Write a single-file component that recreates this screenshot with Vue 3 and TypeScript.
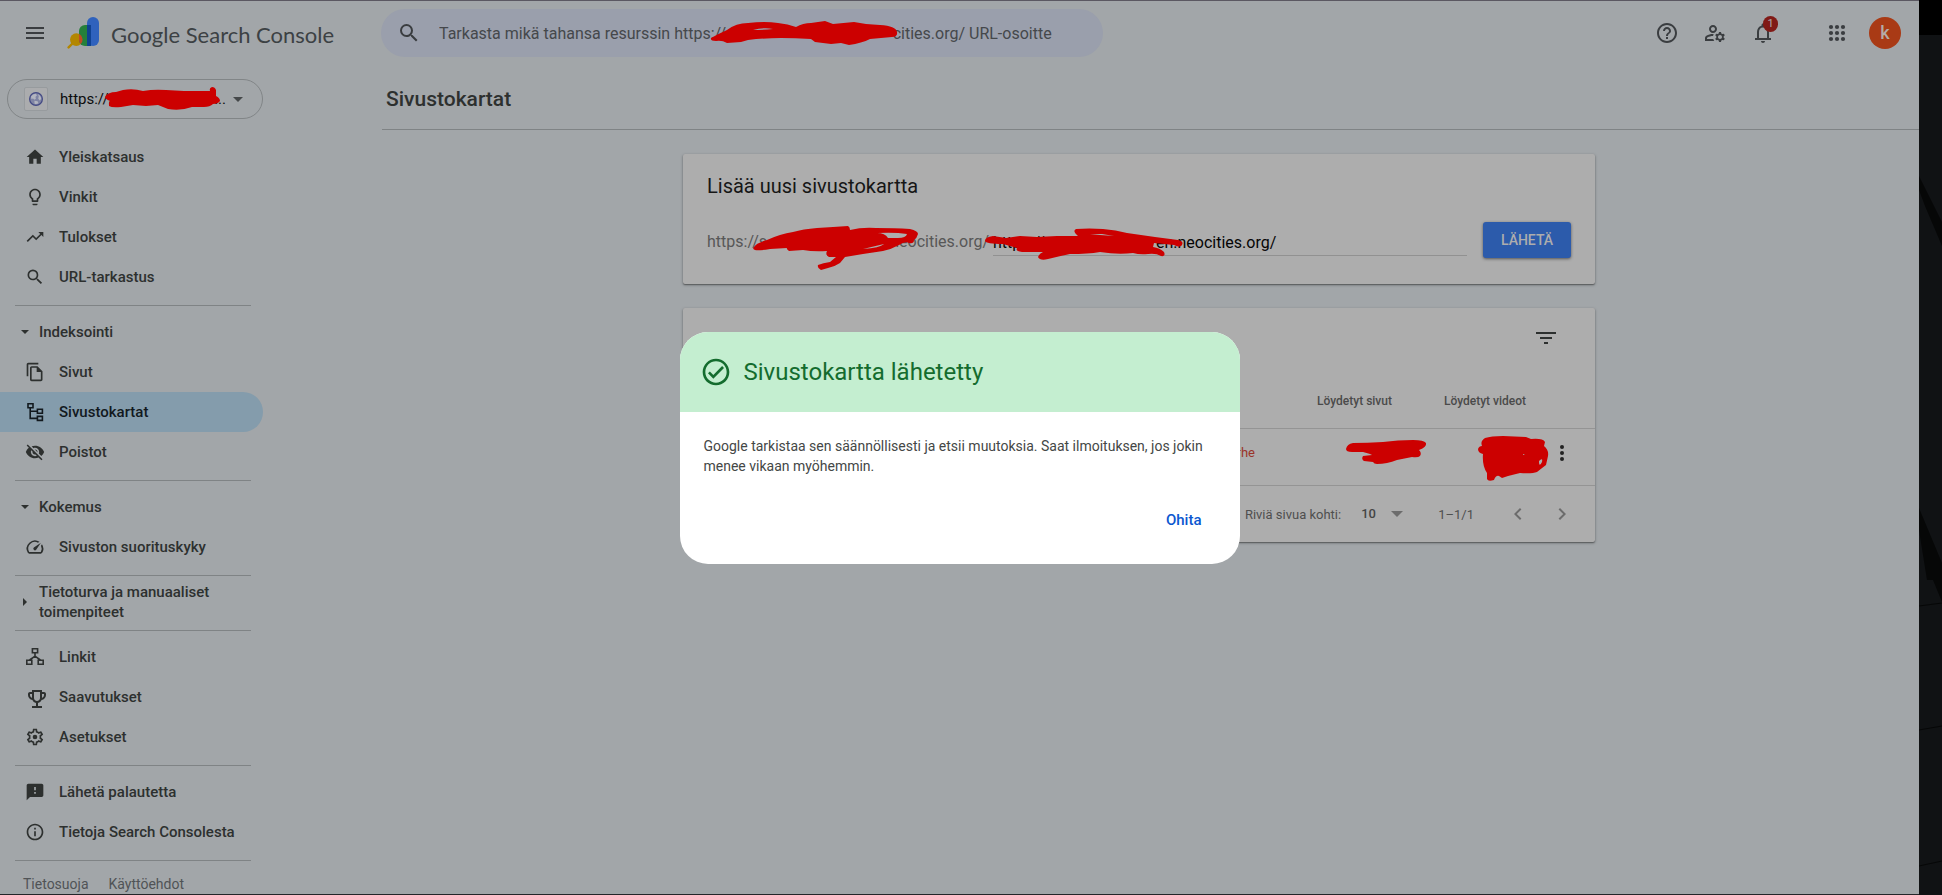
<script setup lang="ts">
import { ref } from 'vue'

interface NavItem {
  label: string
  path: string
  box?: string
  line?: boolean
  active?: boolean
}
interface NavGroup {
  title?: string
  open?: boolean
  items: NavItem[]
}

const searchPath =
  'M15.5 14h-.79l-.28-.27A6.471 6.471 0 0 0 16 9.5 6.5 6.5 0 1 0 9.5 16c1.61 0 3.09-.59 4.23-1.57l.27.28v.79l5 4.99L20.49 19l-4.99-5zm-6 0C7.01 14 5 11.99 5 9.5S7.01 5 9.5 5 14 7.01 14 9.5 11.99 14 9.5 14z'

const groups: NavGroup[] = [
  {
    items: [
      { label: 'Yleiskatsaus', path: 'M10 20v-6h4v6h5v-8h3L12 3 2 12h3v8z' },
      {
        label: 'Vinkit',
        path: 'M9 21c0 .55.45 1 1 1h4c.55 0 1-.45 1-1v-1H9v1zm3-19C8.14 2 5 5.14 5 9c0 2.38 1.19 4.47 3 5.74V17c0 .55.45 1 1 1h6c.55 0 1-.45 1-1v-2.26c1.81-1.27 3-3.36 3-5.74 0-3.86-3.14-7-7-7zm2.85 11.1l-.85.6V16h-4v-2.3l-.85-.6A4.997 4.997 0 0 1 7 9c0-2.76 2.24-5 5-5s5 2.24 5 5c0 1.63-.8 3.16-2.15 4.1z',
      },
      { label: 'Tulokset', path: 'M16 6l2.29 2.29-4.88 4.88-4-4L2 16.59 3.41 18l6-6 4 4 6.3-6.29L22 12V6z' },
      { label: 'URL-tarkastus', path: searchPath },
    ],
  },
  {
    title: 'Indeksointi',
    open: true,
    items: [
      {
        label: 'Sivut',
        path: 'M16 1H4c-1.1 0-2 .9-2 2v14h2V3h12V1zm-1 4H8c-1.1 0-1.99.9-1.99 2L6 21c0 1.1.89 2 1.99 2H19c1.1 0 2-.9 2-2V11l-6-6zM8 21V7h6v5h5v9H8z',
      },
      {
        label: 'Sivustokartat',
        path: 'M3 1.8h5v4H3zM12.4 7.2h5v4h-5zM12.4 14.4h5v4h-5zM5.2 6v10.4h7M5.2 9.2h7',
        box: '0 0 20 20',
        line: true,
        active: true,
      },
      {
        label: 'Poistot',
        path: 'M12 7c2.76 0 5 2.24 5 5 0 .65-.13 1.26-.36 1.83l2.92 2.92c1.51-1.26 2.7-2.89 3.43-4.75-1.73-4.39-6-7.5-11-7.5-1.4 0-2.74.25-3.98.7l2.16 2.16C10.74 7.13 11.35 7 12 7zM2 4.27l2.28 2.28.46.46C3.08 8.3 1.78 10.02 1 12c1.73 4.39 6 7.5 11 7.5 1.55 0 3.03-.3 4.38-.84l.42.42L19.73 22 21 20.73 3.27 3 2 4.27zM7.53 9.8l1.55 1.55c-.05.21-.08.43-.08.65 0 1.66 1.34 3 3 3 .22 0 .44-.03.65-.08l1.55 1.55c-.67.33-1.41.53-2.2.53-2.76 0-5-2.24-5-5 0-.79.2-1.53.53-2.2zm4.31-.78l3.15 3.15.02-.16c0-1.66-1.34-3-3-3l-.17.01z',
      },
    ],
  },
  {
    title: 'Kokemus',
    open: true,
    items: [
      {
        label: 'Sivuston suorituskyky',
        path: 'M20.38 8.57l-1.23 1.85a8 8 0 0 1-.22 7.58H5.07A8 8 0 0 1 15.58 6.85l1.85-1.23A10 10 0 0 0 3.35 19a2 2 0 0 0 1.72 1h13.85a2 2 0 0 0 1.74-1 10 10 0 0 0-.27-10.44zm-9.79 6.84a2 2 0 0 0 2.83 0l5.66-8.49-8.49 5.66a2 2 0 0 0 0 2.83z',
      },
    ],
  },
  { title: 'Tietoturva ja manuaaliset toimenpiteet', open: false, items: [] },
  {
    items: [
      {
        label: 'Linkit',
        path: 'M7.4 1.8h5.2v4H7.4zM1.8 13.2h5v4h-5zM13.2 13.2h5v4h-5zM10 6v3.6M4.6 13L10 9.2l5.4 3.8',
        box: '0 0 20 20',
        line: true,
      },
      {
        label: 'Saavutukset',
        path: 'M19 5h-2V3H7v2H5c-1.1 0-2 .9-2 2v1c0 2.55 1.92 4.63 4.39 4.94.63 1.5 1.98 2.63 3.61 2.96V19H7v2h10v-2h-4v-3.1c1.63-.33 2.98-1.46 3.61-2.96C19.08 12.63 21 10.55 21 8V7c0-1.1-.9-2-2-2zM5 8V7h2v3.82C5.84 10.4 5 9.3 5 8zm7 6c-1.65 0-3-1.35-3-3V5h6v6c0 1.65-1.35 3-3 3zm7-6c0 1.3-.84 2.4-2 2.82V7h2v1z',
        box: '0 0 20 20',
      },
      {
        label: 'Asetukset',
        path: 'M19.43 12.98c.04-.32.07-.64.07-.98 0-.34-.03-.66-.07-.98l2.11-1.65c.19-.15.24-.42.12-.64l-2-3.46c-.09-.16-.26-.25-.44-.25-.06 0-.12.01-.17.03l-2.49 1c-.52-.4-1.08-.73-1.69-.98l-.38-2.65C14.46 2.18 14.25 2 14 2h-4c-.25 0-.46.18-.49.42l-.38 2.65c-.61.25-1.17.59-1.69.98l-2.49-1c-.06-.02-.12-.03-.18-.03-.17 0-.34.09-.43.25l-2 3.46c-.13.22-.07.49.12.64l2.11 1.65c-.04.32-.07.65-.07.98 0 .33.03.66.07.98l-2.11 1.65c-.19.15-.24.42-.12.64l2 3.46c.09.16.26.25.44.25.06 0 .12-.01.17-.03l2.49-1c.52.4 1.08.73 1.69.98l.38 2.65c.03.24.24.42.49.42h4c.25 0 .46-.18.49-.42l.38-2.65c.61-.25 1.17-.59 1.69-.98l2.49 1c.06.02.12.03.18.03.17 0 .34-.09.43-.25l2-3.46c.12-.22.07-.49-.12-.64l-2.11-1.65zm-1.98-1.71c.04.31.05.52.05.73 0 .21-.02.43-.05.73l-.14 1.13.89.7 1.08.84-.7 1.21-1.27-.51-1.04-.42-.9.68c-.43.32-.84.56-1.25.73l-1.06.43-.16 1.13-.2 1.35h-1.4l-.19-1.35-.16-1.13-1.06-.43c-.43-.18-.83-.41-1.23-.71l-.91-.7-1.06.43-1.27.51-.7-1.21 1.08-.84.89-.7-.14-1.13c-.03-.31-.05-.54-.05-.74s.02-.43.05-.73l.14-1.13-.89-.7-1.08-.84.7-1.21 1.27.51 1.04.42.9-.68c.43-.32.84-.56 1.25-.73l1.06-.43.16-1.13.2-1.35h1.39l.19 1.35.16 1.13 1.06.43c.43.18.83.41 1.23.71l.91.7 1.06-.43 1.27-.51.7 1.21-1.07.85-.89.7.14 1.13zM12 9.2a2.8 2.8 0 1 0 0 5.6 2.8 2.8 0 0 0 0-5.6z',
      },
    ],
  },
  {
    items: [
      {
        label: 'Lähetä palautetta',
        path: 'M20 2H4c-1.1 0-1.99.9-1.99 2L2 22l4-4h14c1.1 0 2-.9 2-2V4c0-1.1-.9-2-2-2zm-7 12h-2v-2h2v2zm0-4h-2V6h2v4z',
      },
      {
        label: 'Tietoja Search Consolesta',
        path: 'M11 7h2v2h-2zm0 4h2v6h-2zm1-9C6.48 2 2 6.48 2 12s4.48 10 10 10 10-4.48 10-10S17.52 2 12 2zm0 18c-4.41 0-8-3.59-8-8s3.59-8 8-8 8 3.59 8 8-3.59 8-8 8z',
      },
    ],
  },
]

const blank = (count: number): string => '\u00a0'.repeat(count)
const searchHint = `Tarkasta mikä tahansa resurssin https://${blank(42)}cities.org/ URL-osoitte`
const sitemapUrl = ref(`https://${blank(28)}en.neocities.org/`)
const rowsPerPage = ref('10')
const dialogOpen = ref(true)
const dots = [6, 12, 18]
</script>

<template>
  <div class="desktop">
    <div class="page">
      <header class="topbar">
        <div class="brand">
          <button class="menu" type="button" aria-label="Valikko">
            <svg width="18" height="12" viewBox="0 0 18 12"><path d="M0 0h18v2H0zM0 5h18v2H0zM0 10h18v2H0z" /></svg>
          </button>
          <svg class="logo" width="32" height="32" viewBox="0 0 32 32" aria-hidden="true">
            <defs>
              <clipPath id="green-bar"><rect x="12" y="8" width="16" height="21" rx="6" /></clipPath>
            </defs>
            <path d="M1.6 30.4L7 25" stroke="#b38600" stroke-width="2.4" stroke-linecap="round" />
            <circle cx="9.3" cy="22.6" r="6.3" fill="#b38600" />
            <rect x="12" y="8" width="16" height="21" rx="6" fill="#25803b" />
            <rect x="20" y="0" width="12" height="29" rx="6" fill="#2f62bd" />
            <rect x="20" y="8" width="4" height="21" fill="#0f4291" />
            <circle cx="9.3" cy="22.6" r="6.3" fill="#c04a24" clip-path="url(#green-bar)" />
          </svg>
          <span class="wordmark">Google Search Console</span>
        </div>

        <label class="search">
          <svg width="24" height="24" viewBox="0 0 24 24" aria-hidden="true"><path :d="searchPath" /></svg>
          <input type="text" :placeholder="searchHint" aria-label="Tarkasta URL-osoite" />
          <svg class="mark mark-search" width="188" height="28" viewBox="710 19 188 28" aria-hidden="true">
            <path d="M711 38Q718 34 727 30Q736 23 748 23Q765 21 778 23Q788 24 796 27Q803 23 811 23L825 21L833 24L854 22L866 24L880 25Q896 26 897 32Q898 37 892 37L870 39Q862 43 849 45L841 43L831 44L815 42L811 39Q795 38 781 38Q765 38 748 40L741 42L727 43Q722 40 716 41Q710 41 711 38ZM753 30Q764 27 773 29Q764 30 753 30Z" fill-rule="evenodd" />
          </svg>
        </label>

        <div class="tools">
          <button type="button" aria-label="Ohje">
            <svg width="24" height="24" viewBox="0 0 24 24"><path d="M11 18h2v-2h-2v2zm1-16C6.48 2 2 6.48 2 12s4.48 10 10 10 10-4.48 10-10S17.52 2 12 2zm0 18c-4.41 0-8-3.59-8-8s3.59-8 8-8 8 3.59 8 8-3.59 8-8 8zm0-14c-2.21 0-4 1.79-4 4h2c0-1.1.9-2 2-2s2 .9 2 2c0 2-3 1.75-3 5h2c0-2.25 3-2.5 3-5 0-2.21-1.79-4-4-4z" /></svg>
          </button>
          <button type="button" aria-label="Käyttäjäasetukset">
            <svg width="24" height="24" viewBox="0 0 24 24"><path d="M4 18v-.65c0-.34.16-.66.41-.81C6.1 15.53 8.03 15 10 15c.03 0 .05 0 .08.01.1-.7.3-1.37.59-1.98-.22-.02-.44-.03-.67-.03-2.42 0-4.68.67-6.61 1.82-.88.52-1.39 1.5-1.39 2.53V20h9.26c-.42-.6-.75-1.28-.97-2H4zM10 12c2.21 0 4-1.79 4-4s-1.79-4-4-4-4 1.79-4 4 1.79 4 4 4zm0-6c1.1 0 2 .9 2 2s-.9 2-2 2-2-.9-2-2 .9-2 2-2zM20.75 16c0-.22-.03-.42-.06-.63l1.14-1.01-1-1.73-1.45.49c-.32-.27-.68-.48-1.08-.63L18 11h-2l-.3 1.49c-.4.15-.76.36-1.08.63l-1.45-.49-1 1.73 1.14 1.01c-.03.21-.06.41-.06.63s.03.42.06.63l-1.14 1.01 1 1.73 1.45-.49c.32.27.68.48 1.08.63L16 21h2l.3-1.49c.4-.15.76-.36 1.08-.63l1.45.49 1-1.73-1.14-1.01c.03-.21.06-.41.06-.63zM17 18c-1.1 0-2-.9-2-2s.9-2 2-2 2 .9 2 2-.9 2-2 2z" /></svg>
          </button>
          <button type="button" aria-label="Ilmoitukset">
            <svg width="24" height="24" viewBox="0 0 24 24"><path d="M12 22c1.1 0 2-.9 2-2h-4c0 1.1.9 2 2 2zm6-5v-6c0-3.07-1.63-5.64-4.5-6.32V4c0-.83-.67-1.5-1.5-1.5s-1.5.67-1.5 1.5v.68C7.64 5.36 6 7.92 6 11v6H4v2h16v-2h-2zm-2 0H8v-6c0-2.48 1.51-4.5 4-4.5s4 2.02 4 4.5v6z" /></svg>
            <span class="badge">1</span>
          </button>
          <button class="apps" type="button" aria-label="Google-sovellukset">
            <svg width="24" height="24" viewBox="0 0 24 24">
              <template v-for="y in dots" :key="y">
                <circle v-for="x in dots" :key="x" :cx="x" :cy="y" r="2.1" />
              </template>
            </svg>
          </button>
          <button type="button" aria-label="Google-tili"><span class="avatar">k</span></button>
        </div>
      </header>

      <div class="body">
        <aside class="side">
          <button class="property" type="button">
            <span class="favicon">
              <svg width="16" height="16" viewBox="0 0 16 16" aria-hidden="true">
                <circle cx="8" cy="8" r="6.4" fill="#7f84a4" stroke="#444a84" stroke-width="1.2" />
                <path d="M3 5.4Q4.6 2.8 7.6 2.8L9 4.2 7.4 6 8 7.6 6.6 8.8 5 7.6 3.4 8ZM10 3.2Q13 4.6 13.2 8L11.6 9.4 10.2 7.6 10.8 5.6ZM6.4 9.8L9.6 10.2 10.4 12.2Q8.6 13.4 6.6 12.8Z" fill="#b3b5c0" />
              </svg>
            </span>
            <span class="property-url"><span>https://s</span><span>...</span></span>
            <svg width="10" height="5" viewBox="0 0 10 5" aria-hidden="true"><path d="M0 0h10L5 5z" /></svg>
            <svg class="mark mark-property" width="116" height="24" viewBox="105 87 116 24" aria-hidden="true">
              <path d="M105 97Q108 92 116 92L123 90Q133 88 143 91Q154 89 166 90L184 91L203 91L210 91Q209 88 212 87Q215 87 216 90L216 96Q220 98 220 101Q218 104 213 104Q210 107 204 107L192 107Q181 111 168 109L158 105L146 106L133 105L121 107Q112 108 109 106Q108 103 110 101Q105 99 105 97Z" />
            </svg>
          </button>

          <nav>
            <section v-for="(group, i) in groups" :key="i">
              <button v-if="group.title" type="button" class="group" :aria-expanded="group.open">
                <svg width="8" height="8" viewBox="0 0 8 8" aria-hidden="true">
                  <path :d="group.open ? 'M0 2h8L4 6z' : 'M2 0v8l4-4z'" />
                </svg>
                <span>{{ group.title }}</span>
              </button>
              <a v-for="item in group.items" :key="item.label" href="#" class="item" :class="{ active: item.active }">
                <svg width="20" height="20" :viewBox="item.box ?? '0 0 24 24'" :class="{ line: item.line }" aria-hidden="true">
                  <path :d="item.path" />
                </svg>
                <span>{{ item.label }}</span>
              </a>
            </section>
          </nav>
          <div class="legal"><a href="#">Tietosuoja</a><a href="#">Käyttöehdot</a></div>
        </aside>

        <main class="main">
          <h1>Sivustokartat</h1>
          <div class="cards">
            <section class="card add">
              <h2>Lisää uusi sivustokartta</h2>
              <form class="form" @submit.prevent="dialogOpen = true">
                <label class="prefix" for="sitemap"><span>https://s</span><span>neocities.org/</span></label>
                <input id="sitemap" v-model="sitemapUrl" type="text" />
                <button type="submit">LÄHETÄ</button>
                <svg class="mark mark-prefix" width="168" height="46" viewBox="752 225 168 46" aria-hidden="true">
                  <path d="M754 247Q756 243 767 240Q780 234 793 232Q803 229 817 228L833 227L848 226Q850 227 850 230Q862 227 876 228Q895 228 910 229Q918 231 918 234Q917 238 914 240Q914 244 909 243Q905 241 899 245Q892 249 883 251L863 254L845 257L840 263Q834 267 828 268L821 270Q817 268 818 265Q823 263 830 262L836 257L829 257Q825 255 827 251Q814 252 803 250L789 251Q786 249 787 248L770 249Q758 251 755 250Q752 249 754 247ZM877 233Q895 232 907 234Q906 238 898 238L888 238Q885 233 877 233ZM863 249L884 244Q880 248 863 249Z" fill-rule="evenodd" />
                </svg>
                <svg class="mark mark-input" width="202" height="34" viewBox="983 228 202 34" aria-hidden="true">
                  <path d="M985 241Q985 237 993 236L1006 238L1020 236L1037 237L1057 236L1078 236Q1072 231 1076 229Q1089 228 1103 229Q1116 230 1127 233L1155 237L1178 240Q1184 241 1182 245Q1180 248 1174 245L1154 243L1153 247Q1160 248 1164 252Q1166 257 1161 256Q1156 253 1148 254Q1140 255 1133 253Q1118 255 1100 252Q1088 254 1070 254Q1060 256 1048 259Q1040 261 1038 257Q1039 254 1043 252L1022 252Q1015 251 1017 248L1003 244Q986 244 985 241ZM1090 234L1102 234L1114 236L1100 235Z" fill-rule="evenodd" />
                </svg>
              </form>
            </section>

            <section class="card list">
              <div class="list-tools">
                <button type="button" aria-label="Suodata">
                  <svg width="20" height="12" viewBox="0 0 20 12"><path d="M0 0h20v2H0zM4 5h12v2H4zM8 10h4v2H8z" /></svg>
                </button>
              </div>
              <table>
                <colgroup>
                  <col />
                  <col class="c-status" />
                  <col class="c-pages" />
                  <col class="c-videos" />
                  <col class="c-more" />
                </colgroup>
                <thead>
                  <tr>
                    <th></th>
                    <th></th>
                    <th>Löydetyt sivut</th>
                    <th>Löydetyt videot</th>
                    <th></th>
                  </tr>
                </thead>
                <tbody>
                  <tr>
                    <td></td>
                    <td class="error">1 virhe</td>
                    <td>
                      <svg class="mark mark-pages" width="82" height="26" viewBox="1345 439 82 26" aria-hidden="true">
                        <path d="M1346 449Q1347 444 1353 443Q1367 443 1383 442Q1398 440 1413 440Q1424 440 1426 443Q1427 447 1419 450Q1422 453 1420 456Q1418 458 1412 457L1397 460Q1387 464 1377 464Q1374 464 1373 462L1364 461Q1361 459 1363 456L1372 455Q1371 454 1363 452L1352 452Q1346 452 1346 449Z" />
                      </svg>
                    </td>
                    <td>
                      <svg class="mark mark-videos" width="74" height="48" viewBox="1477 435 74 48" aria-hidden="true">
                        <path d="M1478 449Q1479 446 1482 446Q1480 441 1485 438Q1491 436 1503 436L1526 437L1531 439Q1543 438 1545 442L1544 446Q1549 450 1548 456L1546 465Q1542 468 1537 472Q1532 474 1520 473L1508 476L1502 478L1499 476Q1496 475 1494 480Q1488 482 1487 479L1487 473Q1482 466 1483 454Q1478 453 1478 449ZM1539 461Q1543 457 1542 462Q1539 468 1539 461ZM1523 454L1525 454L1523 455Z" fill-rule="evenodd" />
                      </svg>
                    </td>
                    <td class="more">
                      <button type="button" aria-label="Lisää toimintoja">
                        <svg width="4" height="16" viewBox="0 0 4 16"><circle cx="2" cy="2" r="2" /><circle cx="2" cy="8" r="2" /><circle cx="2" cy="14" r="2" /></svg>
                      </button>
                    </td>
                  </tr>
                </tbody>
              </table>
              <div class="pager">
                <label for="rows">Riviä sivua kohti:</label>
                <span class="select">
                  <select id="rows" v-model="rowsPerPage"><option>10</option></select>
                  <svg width="12" height="6" viewBox="0 0 12 6" aria-hidden="true"><path d="M0 0h12L6 6z" /></svg>
                </span>
                <span class="range">1–1/1</span>
                <button type="button" aria-label="Edellinen">
                  <svg width="24" height="24" viewBox="0 0 24 24"><path d="M15.4 7.4L14 6l-6 6 6 6 1.4-1.4L10.8 12z" /></svg>
                </button>
                <button type="button" aria-label="Seuraava">
                  <svg width="24" height="24" viewBox="0 0 24 24"><path d="M10 6L8.6 7.4l4.6 4.6-4.6 4.6L10 18l6-6z" /></svg>
                </button>
              </div>
            </section>
          </div>
        </main>
      </div>

      <div v-if="dialogOpen" class="scrim">
        <div class="dialog" role="dialog" aria-labelledby="dialog-title">
          <div class="dialog-head">
            <svg width="32" height="32" viewBox="0 0 24 24" aria-hidden="true"><path d="M16.59 7.58L10 14.17l-2.59-2.58L6 13l4 4 8-8zM12 2C6.48 2 2 6.48 2 12s4.48 10 10 10 10-4.48 10-10S17.52 2 12 2zm0 18c-4.42 0-8-3.58-8-8s3.58-8 8-8 8 3.58 8 8-3.58 8-8 8z" /></svg>
            <h2 id="dialog-title">Sivustokartta lähetetty</h2>
          </div>
          <div class="dialog-body">
            <p>Google tarkistaa sen säännöllisesti ja etsii muutoksia. Saat ilmoituksen, jos jokin menee vikaan myöhemmin.</p>
            <button type="button" @click="dialogOpen = false">Ohita</button>
          </div>
        </div>
      </div>
    </div>

    <svg class="wallpaper" viewBox="0 0 23 895" preserveAspectRatio="none" aria-hidden="true">
      <rect width="23" height="895" fill="#101214" />
      <rect width="23" height="35" fill="#000" />
      <path d="M0 176L23 222V246L6 206L0 190ZM0 508L23 563V580H8L0 530ZM14 580H23V602Z" fill="#060707" />
      <path d="M0 606L23 603M0 730L23 726M0 866L23 861" stroke="#060707" stroke-width="1" />
    </svg>
  </div>
</template>

<style>
body {
  margin: 0;
  background: #101214;
}
</style>

<style scoped>
.desktop {
  display: flex;
  min-height: 100vh;
  font-family: Roboto, "Liberation Sans", sans-serif;
  color: #2d302f;
}
.desktop * {
  box-sizing: border-box;
}
button {
  border: 0;
  padding: 0;
  background: none;
  font: inherit;
  color: inherit;
  cursor: pointer;
}
a {
  color: inherit;
  text-decoration: none;
}
svg {
  fill: currentColor;
  flex: none;
}
h1,
h2,
p {
  margin: 0;
}
.page {
  position: relative;
  flex: 1;
  min-width: 0;
  display: flex;
  flex-direction: column;
  background: #a2a6a9;
  border-top: 1px solid #5b5862;
  border-bottom: 1px solid #24262a;
  box-sizing: border-box;
}
.wallpaper {
  width: 23px;
  height: auto;
}

/* Header */
.topbar {
  display: flex;
  align-items: center;
  height: 64px;
  padding-right: 10px;
  color: #3a3d40;
}
.brand {
  display: flex;
  align-items: center;
  width: 360px;
  padding-left: 26px;
  flex: none;
}
.menu {
  display: grid;
  width: 18px;
  height: 40px;
  place-items: center;
}
.logo {
  margin: 0 12px 0 23px;
}
.wordmark {
  padding-top: 4px;
  font: 22px/32px Lato, sans-serif;
  color: #3c4144;
}
.search {
  position: relative;
  display: flex;
  align-items: center;
  flex: 0 1 722px;
  height: 48px;
  margin: 0 auto 0 21px;
  padding: 0 16px;
  gap: 18px;
  border-radius: 24px;
  background: #9a9fac;
}
.search input {
  flex: 1;
  min-width: 0;
  padding: 2px 0 0;
  border: 0;
  outline: 0;
  background: none;
  font: 16px/24px Roboto, sans-serif;
  color: #45484b;
}
.search input::placeholder {
  color: #45484b;
  opacity: 1;
}
.tools {
  display: flex;
}
.tools button {
  position: relative;
  display: grid;
  place-items: center;
  width: 48px;
  height: 48px;
}
.tools .apps {
  margin-left: 26px;
}
.badge {
  position: absolute;
  top: 7px;
  left: 24px;
  width: 15px;
  height: 16px;
  border-radius: 8px;
  background: #801a16;
  color: #adadad;
  font: 11px/16px Roboto, sans-serif;
  text-align: center;
}
.avatar {
  width: 32px;
  height: 32px;
  border-radius: 16px;
  background: #a93a15;
  color: #b5aba7;
  font: 500 18px/32px Roboto, sans-serif;
}

/* Red strokes drawn over the addresses and counts */
.mark {
  position: absolute;
  fill: #cc0000;
  z-index: 1;
}
.mark-search {
  left: 329px;
  top: 10px;
}
.mark-property {
  left: 97px;
  top: 7px;
}
.mark-prefix {
  left: 45px;
  top: 3px;
}
.mark-input {
  left: 276px;
  top: 6px;
}
.mark-pages {
  right: -19px;
  top: 10px;
}
.mark-videos {
  right: -9px;
  top: 6px;
}

/* Sidebar */
.body {
  display: flex;
  flex: 1;
}
.side {
  width: 359px;
  flex: none;
  padding-top: 14px;
}
.property {
  position: relative;
  display: flex;
  align-items: center;
  width: 256px;
  height: 40px;
  margin: 0 0 18px 7px;
  padding: 0 19px 0 16px;
  border: 1px solid #818587;
  border-radius: 20px;
  font-size: 15px;
  color: #0c0d0e;
}
.property > svg:not(.mark) {
  fill: #45484a;
  margin-left: 7px;
}
.favicon {
  display: grid;
  place-items: center;
  width: 24px;
  height: 24px;
  border: 1px solid #979b9e;
  border-radius: 2px;
  background: #abacae;
}
.property-url {
  display: flex;
  justify-content: space-between;
  flex: 1;
  margin-left: 12px;
}
section + section::before {
  content: "";
  display: block;
  height: 1px;
  margin: 8px 108px 6px 15px;
  background: #7f8385;
}
.group,
.item {
  display: flex;
  align-items: center;
  height: 40px;
  font-size: 15px;
  line-height: 20px;
  font-weight: 500;
}
.group {
  width: 252px;
  padding-left: 21px;
  gap: 10px;
  text-align: left;
}
.item {
  width: 263px;
  padding-left: 25px;
  gap: 14px;
}
.item.active {
  border-radius: 0 20px 20px 0;
  background: #849cac;
  color: #12191e;
}
.item svg {
  overflow: visible;
}
.item .line {
  fill: none;
  stroke: currentColor;
  stroke-width: 1.6;
}
.legal {
  display: flex;
  gap: 20px;
  margin-top: 8px;
  padding: 13px 0 0 8px;
  margin-left: 15px;
  width: 236px;
  border-top: 1px solid #7f8385;
  font-size: 14px;
  line-height: 20px;
  color: #505356;
}

/* Main column */
.main {
  flex: 1;
  min-width: 0;
}
.main h1 {
  height: 65px;
  margin-left: 23px;
  padding: 4px 0 0 4px;
  border-bottom: 1px solid #7f8385;
  font-size: 21px;
  line-height: 60px;
  font-weight: 500;
}
.cards {
  display: flex;
  flex-direction: column;
  gap: 24px;
  max-width: 912px;
  margin: 24px auto;
}
.card {
  background: #adadad;
  border-radius: 2px;
  box-shadow: 0 1px 3px rgba(0, 0, 0, 0.35), 0 1px 1px rgba(0, 0, 0, 0.25);
}
.card + .card::before {
  display: none;
}
.add {
  padding: 20px 24px 26px;
}
.add h2 {
  font-size: 20px;
  line-height: 24px;
  font-weight: 400;
  color: #161616;
}
.form {
  position: relative;
  display: flex;
  align-items: center;
  margin-top: 24px;
}
.prefix {
  display: flex;
  justify-content: space-between;
  width: 282px;
  margin-right: 4px;
  color: #575757;
}
.prefix,
.form input {
  height: 32px;
  padding: 5px 0 0;
  font: 16px/26px Roboto, sans-serif;
}
.form input {
  flex: 1;
  min-width: 0;
  border: 0;
  border-bottom: 1px solid #919191;
  border-radius: 0;
  outline: 0;
  background: none;
  color: #050505;
}
.form button {
  width: 88px;
  height: 36px;
  margin-left: 16px;
  border-radius: 3px;
  background: #2c5bab;
  box-shadow: 0 1px 3px rgba(0, 0, 0, 0.5);
  color: #adadad;
  font-size: 14px;
  font-weight: 500;
}
.list-tools {
  display: flex;
  justify-content: flex-end;
  height: 64px;
  padding: 10px 29px 0 0;
}
.list-tools button {
  display: grid;
  place-items: center;
  width: 40px;
  height: 40px;
}
table {
  width: 100%;
  table-layout: fixed;
  border-collapse: separate;
  border-spacing: 0;
}
.c-status {
  width: 120px;
}
.c-pages {
  width: 137px;
}
.c-videos {
  width: 134px;
}
.c-more {
  width: 53px;
}
th,
td {
  position: relative;
  height: 57px;
  padding: 2px 16px 0 0;
  border-bottom: 1px solid #949494;
  text-align: right;
  white-space: nowrap;
}
th {
  font-size: 12px;
  font-weight: 500;
  color: #4a4a4a;
}
td {
  padding: 0 16px 9px 0;
  font-size: 13px;
}
.error {
  color: #9a3328;
}
td.more {
  padding-right: 21px;
}
.more button {
  display: inline-grid;
  place-items: center;
  width: 24px;
  height: 24px;
  vertical-align: middle;
  color: #222;
}
.pager {
  display: flex;
  align-items: center;
  justify-content: flex-end;
  height: 56px;
  padding-right: 21px;
  font-size: 13px;
  color: #4f4f4f;
}
.select {
  display: flex;
  align-items: center;
  gap: 15px;
  margin: 0 35px 0 20px;
}
.select svg {
  fill: #6c6c6c;
}
.select select {
  appearance: none;
  border: 0;
  padding: 0;
  background: none;
  font: 500 13px/20px Roboto, sans-serif;
  color: #454545;
}
.range {
  margin-right: 12px;
}
.pager button {
  height: 24px;
  margin-left: 20px;
  color: #6c6c6c;
}

/* Dialog */
.scrim {
  position: absolute;
  inset: 0;
  z-index: 2;
  display: grid;
  place-items: center;
}
.dialog {
  width: 560px;
  max-width: 90%;
  border-radius: 28px;
  overflow: hidden;
  background: #fff;
}
.dialog-head {
  display: flex;
  align-items: center;
  gap: 12px;
  height: 80px;
  padding: 0 20px;
  background: #c4eed0;
  color: #146c2e;
}
.dialog-head h2 {
  font-size: 24px;
  line-height: 32px;
  font-weight: 400;
}
.dialog-body {
  display: flex;
  flex-direction: column;
  gap: 24px;
  padding: 24px;
  font-size: 14px;
  line-height: 20px;
  color: #444746;
}
.dialog-body button {
  align-self: flex-end;
  height: 40px;
  padding: 0 14px;
  font-size: 15px;
  font-weight: 500;
  color: #0b57d0;
}
</style>
